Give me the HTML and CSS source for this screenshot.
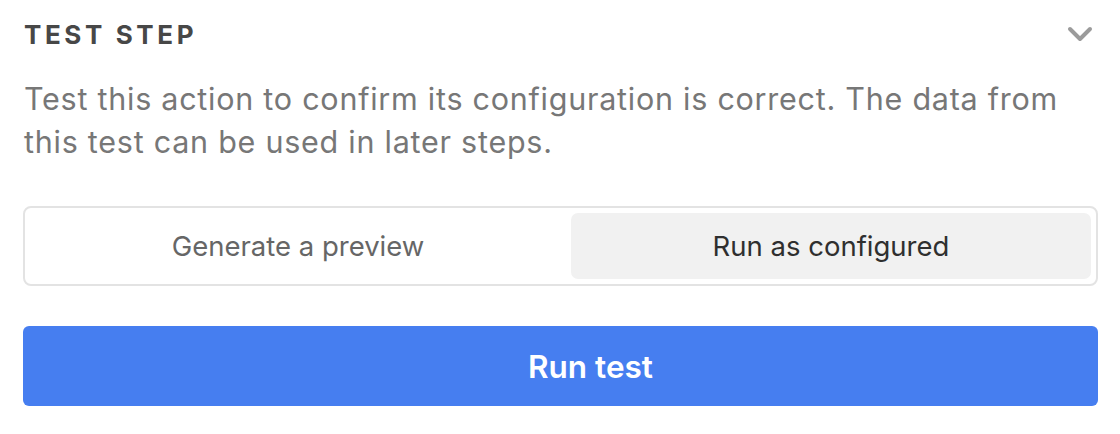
FILE: index.html
```html
<!DOCTYPE html>
<html lang="en">
  <head>
    <meta charset="UTF-8" />
    <meta name="viewport" content="width=device-width, initial-scale=1.0" />
    <link rel="stylesheet" href="styles.css">
    <title>Test step</title>
  </head>
  <body>
    <section class="test-step">
      <div class="step-header">
        <h2 class="step-title">Test step</h2>
        <button type="button" class="collapse-btn" aria-label="Collapse">
          <svg width="26" height="17" viewBox="0 0 26 17">
            <path d="M3 3 L13 13 L23 3" fill="none" stroke="#9b9b9b" stroke-width="4" stroke-linecap="round" stroke-linejoin="round" />
          </svg>
        </button>
      </div>
      <p class="step-text">
        Test this action to confirm its configuration is correct. The data from
        this test can be used in later steps.
      </p>
      <div class="mode-switch">
        <button type="button" class="mode-option">Generate a preview</button>
        <button type="button" class="mode-option mode-option--active">Run as configured</button>
      </div>
      <button type="button" class="run-btn">Run test</button>
    </section>
  </body>
</html>
```

FILE: styles.css
```css
h1,
h2,
p {
  margin: 0;
  padding: 0;
}

body {
  margin: 0;
  background-color: #fff;
  font-family: Inter, "Noto Sans", sans-serif;
}

button {
  font-family: inherit;
}

.test-step {
  display: flex;
  flex-direction: column;
  padding: 18px 22px 0 23px;
}

.step-header {
  display: flex;
  justify-content: space-between;
  align-items: center;
  height: 32px;
}

.step-title {
  margin-left: 1px;

  font-size: 26px;
  font-weight: 700;
  letter-spacing: 3.6px;
  text-transform: uppercase;
  color: #474747;
}

.collapse-btn {
  display: flex;
  padding: 0;
  margin-right: 5px;

  background: none;
  border: none;
  cursor: pointer;
}

.step-text {
  max-width: 1060px;
  margin-top: 27px;
  margin-left: 1px;

  font-size: 30.5px;
  line-height: 43px;
  letter-spacing: 0.75px;
  color: #777;
}

.mode-switch {
  display: flex;
  gap: 5px;
  margin-top: 43px;
  padding: 5px;

  border: 2px solid #e3e3e3;
  border-radius: 8px;
}

.mode-option {
  flex: auto;
  height: 66px;

  font-size: 27.5px;
  color: #666;
  background: none;
  border: none;
  border-radius: 7px;
  cursor: pointer;
}

.mode-option--active {
  color: #2f2f2f;
  background-color: #f1f1f1;
}

.run-btn {
  height: 80px;
  margin-top: 40px;
  padding-left: 66px;

  font-size: 31.5px;
  font-weight: 600;
  color: #fff;
  background-color: #467ef0;
  border: none;
  border-radius: 6px;
  cursor: pointer;
}
```
